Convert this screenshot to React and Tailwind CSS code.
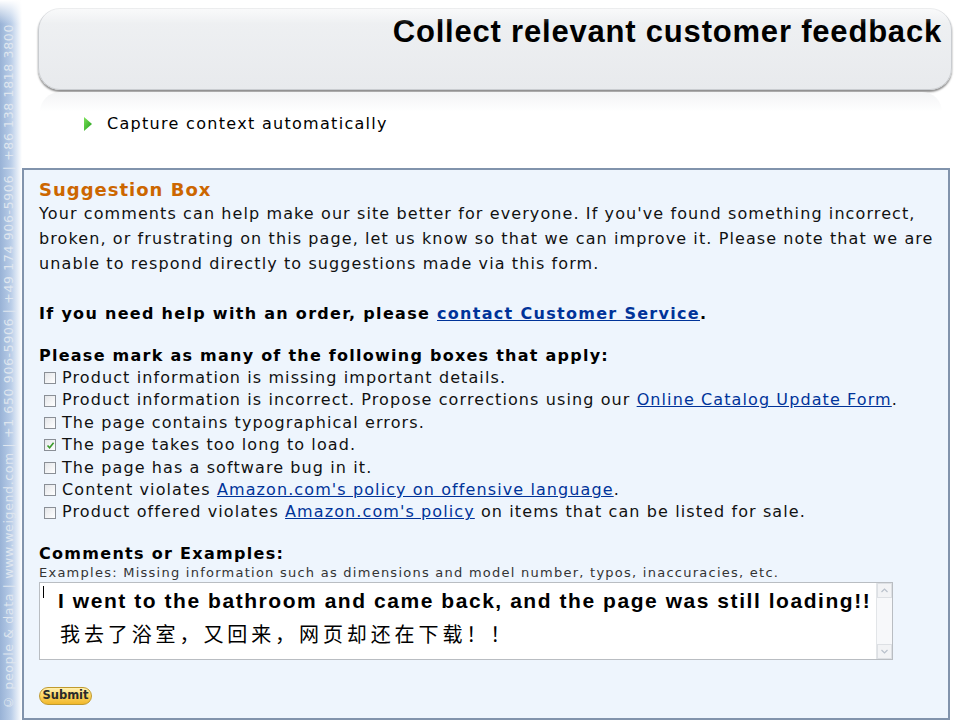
const verdana = { fontFamily: '"DejaVu Sans", Verdana, sans-serif' };

const issues = [
  { checked: false, text: "Product information is missing important details." },
  {
    checked: false,
    text: "Product information is incorrect. Propose corrections using our ",
    link: "Online Catalog Update Form",
    after: ".",
  },
  { checked: false, text: "The page contains typographical errors." },
  { checked: true, text: "The page takes too long to load." },
  { checked: false, text: "The page has a software bug in it." },
  { checked: false, text: "Content violates ", link: "Amazon.com's policy on offensive language", after: "." },
  {
    checked: false,
    text: "Product offered violates ",
    link: "Amazon.com's policy",
    after: " on items that can be listed for sale.",
  },
];

function Checkbox({ checked }) {
  return (
    <span className="mr-[6px] inline-flex h-[12px] w-[12px] shrink-0 items-center justify-center border border-[#8a8f96] bg-gradient-to-br from-[#e4e6e9] to-white">
      {checked ? (
        <svg width="9" height="9" viewBox="0 0 9 9">
          <path d="M1.5 4.5 L3.6 6.7 L7.6 1.8" fill="none" stroke="#3a9a2a" strokeWidth="1.6" />
        </svg>
      ) : null}
    </span>
  );
}

function SideStrip() {
  return (
    <div className="flex w-[22px] shrink-0 items-end justify-center bg-gradient-to-r from-[#98b2d6] via-[#b9cde8] to-white pb-[10px]">
      <div
        className="-translate-x-[2px] rotate-180 whitespace-nowrap text-[12.5px] tracking-[0.65px] text-[#dfe6ef] [writing-mode:vertical-rl]"
        style={verdana}
      >
        © people &amp; data | www.weigend.com | +1 650 906-5906 | +49 174 906-5906 | +86 138 1818 3800
      </div>
    </div>
  );
}

export default function App() {
  return (
    <div className="relative flex h-[720px] w-[960px] overflow-hidden bg-white">
      <div className="absolute inset-x-0 top-0 h-[24px] bg-gradient-to-b from-white to-transparent" />
      <SideStrip />
      <main className="flex flex-1 flex-col">
        <header className="ml-[16px] mr-[8px] mt-[8px] flex h-[82px] justify-end rounded-[22px] border border-[#c9ccd0] bg-gradient-to-b from-[#eff1f3] to-[#e8eaed] pr-[9px] pt-[5px] shadow-[0_2px_2px_rgba(0,0,0,0.45)]">
          <h1
            className="text-[31px] font-bold leading-[36px] tracking-[0.8px] text-black"
            style={{ fontFamily: '"Liberation Sans", Arial, sans-serif' }}
          >
            Collect relevant customer feedback
          </h1>
        </header>
        <div className="mx-[18px] mt-[2px] h-[20px] rounded-t-[20px] bg-gradient-to-b from-[#f3f4f5] to-white" />

        <div className="ml-[62px] flex h-[24px] items-center">
          <svg width="8" height="14" viewBox="0 0 8 14" className="mr-[15px]">
            <defs>
              <linearGradient id="tri" x1="0" y1="0" x2="1" y2="1">
                <stop offset="0" stopColor="#7de35a" />
                <stop offset="1" stopColor="#1f9b1a" />
              </linearGradient>
            </defs>
            <path d="M0 0 L8 7 L0 14 Z" fill="url(#tri)" />
          </svg>
          <span className="text-[16px] leading-[24px] tracking-[1.3px] text-black" style={verdana}>
            Capture context automatically
          </span>
        </div>

        <section
          className="mr-[10px] mt-[32px] flex-1 border-2 border-[#8193ac] bg-[#eef5fd] pl-[15px] pt-[8px] text-[16px] tracking-[1.1px] text-[#111]"
          style={verdana}
        >
          <h2 className="text-[18px] font-bold leading-[23px] tracking-[1px] text-[#cc6600]">Suggestion Box</h2>
          <p className="leading-[25px]">
            Your comments can help make our site better for everyone. If you've found something incorrect,
            <br />
            broken, or frustrating on this page, let us know so that we can improve it. Please note that we are
            <br />
            unable to respond directly to suggestions made via this form.
          </p>
          <p className="mt-[25px] font-bold leading-[25px] tracking-[1.3px] text-black">
            If you need help with an order, please{" "}
            <span className="text-[#003399] underline">contact Customer Service</span>.
          </p>
          <p className="mt-[19px] font-bold leading-[22px] tracking-[1.25px] text-black">
            Please mark as many of the following boxes that apply:
          </p>
          <ul className="pl-[5px]">
            {issues.map((item, i) => (
              <li key={i} className="flex items-center whitespace-nowrap leading-[22.4px]">
                <Checkbox checked={item.checked} />
                <span>
                  {item.text}
                  {item.link ? <span className="text-[#003399] underline">{item.link}</span> : null}
                  {item.after}
                </span>
              </li>
            ))}
          </ul>
          <p className="mt-[20px] font-bold leading-[20px] tracking-[1.3px] text-black">Comments or Examples:</p>
          <p className="text-[13px] leading-[18px] tracking-[1.25px] text-[#333]">
            Examples: Missing information such as dimensions and model number, typos, inaccuracies, etc.
          </p>
          <div className="flex h-[78px] w-[854px] border border-[#b9bdc2] bg-white tracking-normal">
            <div className="relative flex-1 pl-[18px] pt-[5px]">
              <span className="absolute left-[3px] top-[3px] h-[12px] w-px bg-black" />
              <p
                className="whitespace-nowrap text-[21px] font-bold leading-[26px] tracking-[1.55px] text-black"
                style={{ fontFamily: '"Liberation Sans", Arial, sans-serif' }}
              >
                I went to the bathroom and came back, and the page was still loading!!
              </p>
              <p
                className="mt-[5px] whitespace-nowrap pl-[2px] text-[20px] leading-[30px] tracking-[3.9px] text-black"
                style={{ fontFamily: '"Noto Sans CJK SC", sans-serif' }}
              >
                我去了浴室，又回来，网页却还在下载！！
              </p>
            </div>
            <div className="flex w-[16px] flex-col justify-between border-l border-[#e2e5e8] bg-[#f7f8fa]">
              <div className="flex h-[15px] items-center justify-center border border-[#dde0e4] bg-[#f2f3f5]">
                <svg width="7" height="5" viewBox="0 0 7 5">
                  <path d="M0.5 4 L3.5 1 L6.5 4" fill="none" stroke="#b9c1cb" strokeWidth="1.2" />
                </svg>
              </div>
              <div className="flex h-[15px] items-center justify-center border border-[#dde0e4] bg-[#f2f3f5]">
                <svg width="7" height="5" viewBox="0 0 7 5">
                  <path d="M0.5 1 L3.5 4 L6.5 1" fill="none" stroke="#b9c1cb" strokeWidth="1.2" />
                </svg>
              </div>
            </div>
          </div>
          <button
            type="button"
            className="mt-[27px] flex h-[18px] w-[53px] items-center justify-center rounded-full border border-[#c09a2e] bg-gradient-to-b from-[#fff0b0] via-[#fcd35c] to-[#f1b82a] text-[11.5px] font-semibold tracking-normal text-[#2a2a2a]"
            style={{ fontFamily: '"DejaVu Sans", Tahoma, sans-serif' }}
          >
            Submit
          </button>
        </section>
      </main>
    </div>
  );
}
